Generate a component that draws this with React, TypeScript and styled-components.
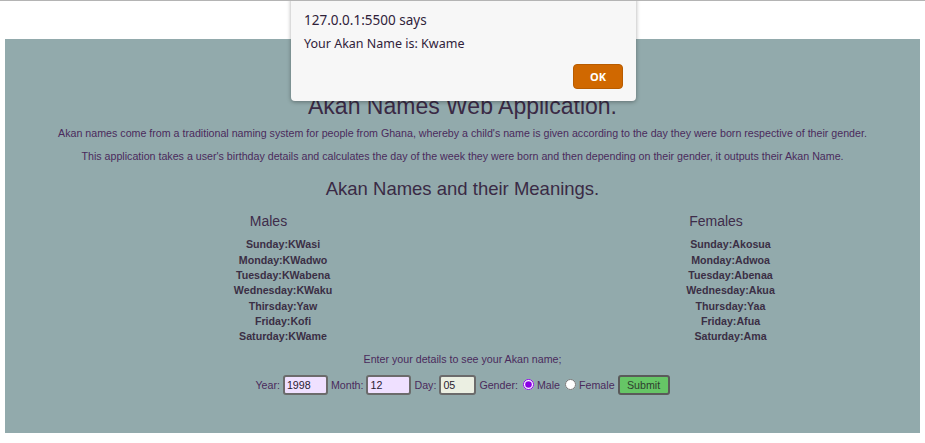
import styled, { createGlobalStyle } from "styled-components";

const GlobalStyle = createGlobalStyle`
  html, body {
    margin: 0;
    padding: 0;
    background: #ffffff;
  }
  body {
    font-family: "Liberation Sans", Arial, sans-serif;
    border-top: 1px solid #b4b4b4;
  }
`;

const Page = styled.div`
  position: relative;
  width: 925px;
  height: 442px;
  overflow: hidden;
  padding-top: 38px;
  box-sizing: border-box;
`;

const Panel = styled.main`
  margin: 0 5px;
  height: 394px;
  background: #92aaac;
  text-align: center;
  padding-top: 53px;
  box-sizing: border-box;
  color: #4a2a5c;
`;

const Title = styled.h1`
  margin: 0;
  font-size: 23px;
  line-height: 28px;
  font-weight: normal;
  color: #3a2a45;
`;

const Intro = styled.p<{ $gap: number }>`
  margin: ${(p) => p.$gap}px 0 0;
  font-size: 10.67px;
  line-height: 14px;
`;

const Subtitle = styled.h2`
  margin: 14px 0 0;
  font-size: 18.5px;
  line-height: 24px;
  font-weight: normal;
  color: #3a2a45;
`;

const Columns = styled.div`
  display: grid;
  grid-template-columns: 200px 200px;
  column-gap: 247.5px;
  padding-left: 163.5px;
  margin-top: 11px;
`;

const Column = styled.section`
  text-align: center;
`;

const ColumnHeading = styled.h3`
  margin: 0;
  font-size: 14px;
  line-height: 18px;
  font-weight: normal;
  color: #3e2c4a;
`;

const NameList = styled.ul`
  list-style: none;
  margin: 7.3px 0 0;
  padding: 0 0 0 29px;
`;

const NameItem = styled.li`
  font-size: 10.67px;
  line-height: 15.33px;
  font-weight: bold;
  color: #3b2f45;
`;

const Prompt = styled.p`
  margin: 7.4px 0 0;
  font-size: 10.67px;
  line-height: 14px;
`;

const FormRow = styled.form`
  margin-top: 8px;
  display: flex;
  justify-content: center;
  align-items: center;
  height: 22px;
  font-size: 10.67px;
  gap: 3px;
`;

const Label = styled.label``;

const TextInput = styled.input<{ $width: number; $bg: string }>`
  width: ${(p) => p.$width}px;
  height: 20px;
  box-sizing: border-box;
  border: 2px solid #6b6b6b;
  border-radius: 3px;
  background: ${(p) => p.$bg};
  font-family: "Liberation Sans", Arial, sans-serif;
  font-size: 10.67px;
  color: #2a1a30;
  padding: 0 2px;
  outline: none;
`;

const Radio = styled.input`
  margin: 0 0 0 2px;
  width: 11px;
  height: 11px;
  accent-color: #8a00e6;
`;

const SubmitButton = styled.button`
  width: 52px;
  height: 20px;
  box-sizing: border-box;
  border: 2px solid #5a5a5a;
  border-radius: 3px;
  background: #66c566;
  color: #2e3e2e;
  font-family: "Liberation Sans", Arial, sans-serif;
  font-size: 10.67px;
  padding: 0;
`;

const Dialog = styled.div`
  position: absolute;
  left: 291px;
  top: -6px;
  width: 345px;
  height: 106px;
  box-sizing: border-box;
  background: #f7f7f7;
  border-radius: 4px;
  box-shadow: 0 1px 4px rgba(0, 0, 0, 0.35);
  padding: 16px 13px 0;
  font-family: "Noto Sans", "Open Sans", sans-serif;
  color: #30223a;
  display: flex;
  flex-direction: column;
`;

const DialogTitle = styled.div`
  font-size: 13.5px;
  line-height: 18px;
`;

const DialogMessage = styled.div`
  margin-top: 7px;
  font-size: 12.5px;
  line-height: 16px;
`;

const DialogActions = styled.div`
  display: flex;
  justify-content: flex-end;
  margin-top: 12px;
`;

const OkButton = styled.button`
  width: 50px;
  height: 25px;
  border: 1px solid #b85c00;
  border-radius: 4px;
  background: #d06800;
  color: #ffffff;
  font-family: "Noto Sans", "Open Sans", sans-serif;
  font-size: 11px;
  font-weight: bold;
  padding: 0;
`;

const males = [
  "Sunday:KWasi",
  "Monday:KWadwo",
  "Tuesday:KWabena",
  "Wednesday:KWaku",
  "Thirsday:Yaw",
  "Friday:Kofi",
  "Saturday:KWame",
];

const females = [
  "Sunday:Akosua",
  "Monday:Adwoa",
  "Tuesday:Abenaa",
  "Wednesday:Akua",
  "Thursday:Yaa",
  "Friday:Afua",
  "Saturday:Ama",
];

const App = () => {
  return (
    <>
      <GlobalStyle />
      <Page>
        <Panel>
          <Title>Akan Names Web Application.</Title>
          <Intro $gap={6}>
            Akan names come from a traditional naming system for people from
            Ghana, whereby a child's name is given according to the day they
            were born respective of their gender.
          </Intro>
          <Intro $gap={9}>
            This application takes a user's birthday details and calculates the
            day of the week they were born and then depending on their gender,
            it outputs their Akan Name.
          </Intro>
          <Subtitle>Akan Names and their Meanings.</Subtitle>
          <Columns>
            <Column>
              <ColumnHeading>Males</ColumnHeading>
              <NameList>
                {males.map((n) => (
                  <NameItem key={n}>{n}</NameItem>
                ))}
              </NameList>
            </Column>
            <Column>
              <ColumnHeading>Females</ColumnHeading>
              <NameList>
                {females.map((n) => (
                  <NameItem key={n}>{n}</NameItem>
                ))}
              </NameList>
            </Column>
          </Columns>
          <Prompt>Enter your details to see your Akan name;</Prompt>
          <FormRow onSubmit={(e) => e.preventDefault()}>
            <Label>Year:</Label>
            <TextInput $width={45} $bg="#efe0ff" defaultValue="1998" />
            <Label>Month:</Label>
            <TextInput $width={45} $bg="#efe0ff" defaultValue="12" />
            <Label>Day:</Label>
            <TextInput $width={37} $bg="#ebefe2" defaultValue="05" />
            <Label>Gender:</Label>
            <Radio type="radio" name="gender" defaultChecked />
            <Label>Male</Label>
            <Radio type="radio" name="gender" />
            <Label>Female</Label>
            <SubmitButton type="submit">Submit</SubmitButton>
          </FormRow>
        </Panel>
        <Dialog>
          <DialogTitle>127.0.0.1:5500 says</DialogTitle>
          <DialogMessage>Your Akan Name is: Kwame</DialogMessage>
          <DialogActions>
            <OkButton>OK</OkButton>
          </DialogActions>
        </Dialog>
      </Page>
    </>
  );
};

export default App;
